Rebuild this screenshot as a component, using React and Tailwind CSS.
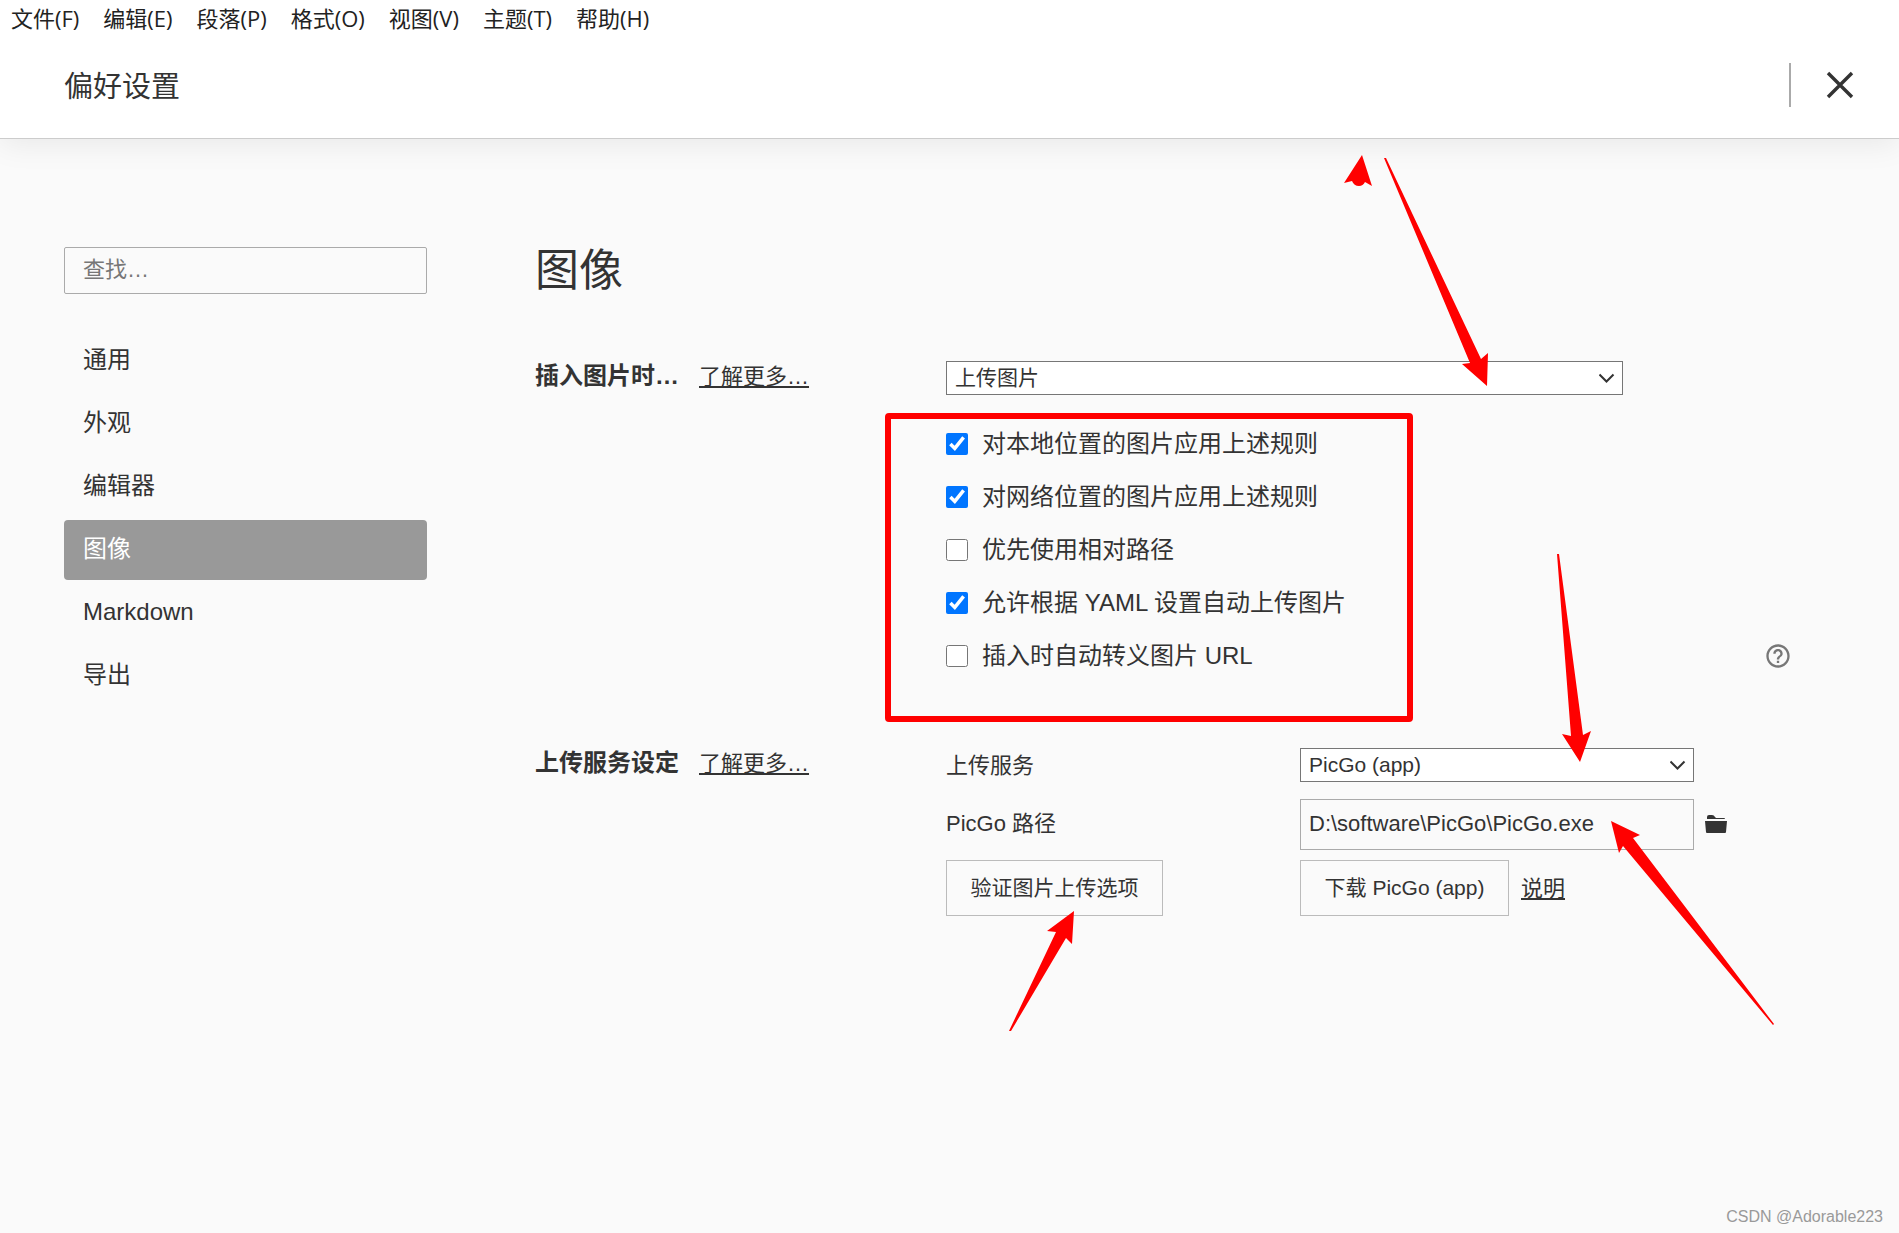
import { useState } from "react";
import { MdHelpOutline } from "react-icons/md";

const menus = ["文件(F)", "编辑(E)", "段落(P)", "格式(O)", "视图(V)", "主题(T)", "帮助(H)"];

const tabs = ["通用", "外观", "编辑器", "图像", "Markdown", "导出"];

const rules = [
  { id: "local", label: "对本地位置的图片应用上述规则", checked: true },
  { id: "network", label: "对网络位置的图片应用上述规则", checked: true },
  { id: "relative", label: "优先使用相对路径", checked: false },
  { id: "yaml", label: "允许根据 YAML 设置自动上传图片", checked: true },
  { id: "escape", label: "插入时自动转义图片 URL", checked: false, help: true },
];

function Select({ children, ...props }) {
  return (
    <div className="relative">
      <select className="block w-full h-[34px] appearance-none border border-[#767676] bg-white pl-2 pr-10 text-[21px] leading-[30px]" {...props}>
        {children}
      </select>
      <svg className="absolute right-2 top-2 w-4 h-[18px] pointer-events-none" viewBox="0 0 16 18" fill="none" stroke="#333" strokeWidth="2">
        <path d="M0.5 5.5 7.5 12.5 14.5 5.5" />
      </svg>
    </div>
  );
}

function SectionTitle({ children }) {
  return (
    <div className="flex items-center gap-5 h-[34px] -mt-0.5">
      <h2 className="text-2xl font-bold">{children}</h2>
      <a href="#more" className="text-[22px] underline decoration-2 underline-offset-2">了解更多…</a>
    </div>
  );
}

function Header() {
  return (
    <header className="relative bg-white border-b border-[#ccc] shadow-[0_4px_30px_rgba(0,0,0,0.08)]">
      <nav className="flex gap-6 h-9 px-[11px] text-[22px] leading-9 text-[#222] font-['Open_Sans','Noto_Sans_CJK_SC',sans-serif]">
        {menus.map(m => <button key={m} type="button">{m}</button>)}
      </nav>

      <div className="flex items-center justify-between h-[102px] pl-16 pr-[45px]">
        <h1 className="text-[29px] leading-10">偏好设置</h1>
        <div className="flex items-center pb-1">
          <div className="w-0.5 h-11 bg-[#aaa]"></div>
          <button type="button" aria-label="关闭" className="ml-[35px]">
            <svg className="w-7 h-7" viewBox="0 0 28 28" fill="none" stroke="#333" strokeWidth="3.4">
              <path d="M2 2 26 26M26 2 2 26" />
            </svg>
          </button>
        </div>
      </div>
    </header>
  );
}

// red arrows drawn over the page
function Arrows() {
  return (
    <svg className="absolute left-0 top-0 w-[1899px] h-[1233px] max-w-none pointer-events-none" viewBox="0 0 1899 1233" fill="#f00" aria-hidden="true">
      <path d="M1362 155 1344 183 1352 181Q1354 186 1359 186 1363 186 1365 182L1372 186Z" />
      <path d="M1384 158 1386 158 1481 359 1488 353 1487 386 1462 364 1470 363Z" />
      <path d="M1557 554 1559 554 1583 735 1591 731 1580 762 1562 734 1571 736Z" />
      <path d="M1611 821 1640 835 1633 838 1774 1024 1773 1025 1623 846 1619 853Z" />
      <path d="M1074 911 1072 944 1066 938 1011 1031 1009 1031 1056 932 1047 931Z" />
    </svg>
  );
}

export default function App() {
  const [tab, setTab] = useState("图像");

  return (
    <div className="relative flex flex-col min-h-screen overflow-hidden bg-[#fafafa] text-[#333] font-['Liberation_Sans','Noto_Sans_CJK_SC',sans-serif]">
      <Header />

      <div className="flex gap-[108px] pt-[108px] pl-16 pr-[107px]">
        <aside className="w-[363px] shrink-0">
          <input type="text" aria-label="查找" placeholder="查找…" className="block w-full h-[47px] px-[18px] pb-0.5 text-[22px] border border-[#aaa] rounded-xs placeholder:text-[#777]" />

          <nav className="flex flex-col gap-[3px] mt-[37px]">
            {tabs.map(t => (
              <button
                key={t}
                type="button"
                onClick={() => setTab(t)}
                className={`h-[60px] px-[19px] pb-0.5 text-left text-2xl rounded-sm ${tab === t ? "bg-[#999] text-white" : ""}`}
              >
                {t}
              </button>
            ))}
          </nav>
        </aside>

        <main className="flex-1 min-w-0">
          <h1 className="h-[114px] text-[44px] leading-12">图像</h1>

          <section className="grid grid-cols-[411px_1fr]">
            <SectionTitle>插入图片时…</SectionTitle>
            <div>
              <div className="w-4/5">
                <Select aria-label="插入图片时">
                  <option>上传图片</option>
                  <option>无特殊操作</option>
                </Select>
              </div>

              <div className="relative mt-[22px] pb-[66px]">
                {rules.map(r => (
                  <div key={r.id} className="flex items-center justify-between h-[53px]">
                    <label className="flex items-center gap-[14px] text-2xl">
                      <input type="checkbox" defaultChecked={r.checked} className="w-[22px] h-[22px]" />
                      {r.label}
                    </label>
                    {r.help && <button type="button" aria-label="帮助"><MdHelpOutline className="w-7 h-7 text-[#777]" /></button>}
                  </div>
                ))}
                <div className="absolute -left-[61px] -top-1 w-[528px] h-[309px] border-6 border-[#f00] rounded-sm pointer-events-none"></div>
              </div>
            </div>
          </section>

          <section className="grid grid-cols-[411px_1fr]">
            <SectionTitle>上传服务设定</SectionTitle>
            <div className="grid grid-cols-[354px_1fr] text-[22px]">
              <label htmlFor="service" className="leading-9">上传服务</label>
              <div className="w-[394px]">
                <Select id="service">
                  <option>PicGo (app)</option>
                  <option>PicGo-Core</option>
                </Select>
              </div>

              <label htmlFor="path" className="mt-[15px] leading-[50px]">PicGo 路径</label>
              <div className="flex items-center gap-[10px] mt-[15px]">
                <input id="path" type="text" defaultValue="D:\software\PicGo\PicGo.exe" className="w-[394px] h-[51px] px-2 pb-0.5 border border-[#aaa]" />
                <button type="button" aria-label="选择文件夹">
                  <svg className="w-6 h-5" viewBox="0 0 24 20" fill="#333">
                    <path d="M3 3V2Q3 0 5 0H8Q10 0 11 2L12 3H20Q21 3 21 4H3ZM1 6H23L22 17Q22 18 21 18H3Q2 18 2 17Z" />
                  </svg>
                </button>
              </div>

              <div className="mt-[10px]">
                <button type="button" className="w-[217px] h-14 border border-[#bbb] text-[21px]">验证图片上传选项</button>
              </div>
              <div className="flex items-center gap-3 mt-[10px]">
                <button type="button" className="w-[209px] h-14 border border-[#bbb] text-[21px]">下载 PicGo (app)</button>
                <a href="#help" className="underline decoration-2 underline-offset-2">说明</a>
              </div>
            </div>
          </section>
        </main>
      </div>

      <footer className="mt-auto pr-4 pb-1 text-right text-base leading-6 text-[#999]">CSDN @Adorable223</footer>

      <Arrows />
    </div>
  );
}
